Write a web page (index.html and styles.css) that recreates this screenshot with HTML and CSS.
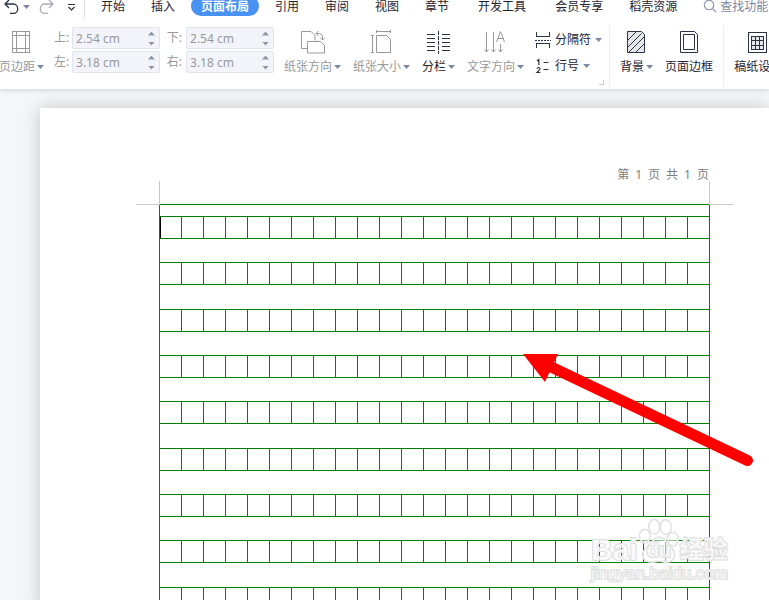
FILE: index.html
```html
<!DOCTYPE html>
<html lang="zh-CN">
<head>
<meta charset="utf-8">
<meta name="viewport" content="width=device-width, initial-scale=1">
<title>页面布局</title>
<link rel="stylesheet" href="styles.css">
</head>
<body>
<header class="toolbar">
  <nav class="tabs">
    <div class="quick">
      <button class="quick-btn" aria-label="撤销"><svg width="16" height="20" viewBox="0 0 16 20" fill="none" stroke="#2b3245" stroke-width="1.3"><path d="M2 7h8.500a4.200 4.700 0 0 1 0 9.400H7M6 3L2 7l4 4"/></svg></button>
      <button class="quick-btn" aria-label="撤销列表"><span class="caret"></span></button>
      <button class="quick-btn redo" aria-label="恢复"><svg width="16" height="20" viewBox="0 0 16 20" fill="none" stroke="#a8abb2" stroke-width="1.3"><path d="M14 7H5.500a4.200 4.700 0 0 0 0 9.400H9M10 3l4 4-4 4"/></svg></button>
      <button class="quick-btn more" aria-label="自定义快速访问"><svg width="9" height="20" viewBox="0 0 9 20" fill="none" stroke="#2b3245" stroke-width="1.2"><path d="M1 7.500h7M1.500 10l3 3 3-3"/></svg></button>
    </div>
    <a class="tab" href="#">开始</a>
    <a class="tab" href="#">插入</a>
    <a class="tab active" href="#">页面布局</a>
    <a class="tab" href="#">引用</a>
    <a class="tab" href="#">审阅</a>
    <a class="tab" href="#">视图</a>
    <a class="tab" href="#">章节</a>
    <a class="tab wide" href="#">开发工具</a>
    <a class="tab wide" href="#">会员专享</a>
    <a class="tab" href="#">稻壳资源</a>
    <button class="search"><svg width="14" height="14" viewBox="0 0 14 14" fill="none" stroke="#8d98b3" stroke-width="1.2"><circle cx="6" cy="5" r="4.700"/><path d="M9.500 8.500l3.500 3.500"/></svg>查找功能</button>
  </nav>
  <div class="ribbon">
    <div class="group first">
      <button class="tool" disabled>
        <svg width="24" height="24" viewBox="0 0 24 24" fill="none" stroke="#999" shape-rendering="crispEdges"><path d="M2.500 1.500h17v21h-17zM6.500 1.500v21M15.500 1.500v21M2.500 5.500h17M2.500 18.500h17"/></svg>
        <span class="label">页边距<span class="caret"></span></span>
      </button>
      <div class="margins">
        <label for="m-top">上:</label>
        <div class="spin"><input id="m-top" value="2.54 cm"><div class="steps"><button class="up" aria-label="增加"></button><button class="down" aria-label="减少"></button></div></div>
        <label for="m-bottom">下:</label>
        <div class="spin"><input id="m-bottom" value="2.54 cm"><div class="steps"><button class="up" aria-label="增加"></button><button class="down" aria-label="减少"></button></div></div>
        <label for="m-left">左:</label>
        <div class="spin"><input id="m-left" value="3.18 cm"><div class="steps"><button class="up" aria-label="增加"></button><button class="down" aria-label="减少"></button></div></div>
        <label for="m-right">右:</label>
        <div class="spin"><input id="m-right" value="3.18 cm"><div class="steps"><button class="up" aria-label="增加"></button><button class="down" aria-label="减少"></button></div></div>
      </div>
    </div>
    <div class="group">
      <button class="tool" disabled>
        <svg width="24" height="24" viewBox="0 0 24 24" fill="none" stroke="#999"><path d="M5.500 18.500H-.500v-17h9.500l4 4v5M5.500 11.500h13l4 4v7.500h-17zM14 3.500h3.500q3 0 3 3.500v3M16.500 1L14 3.500 16.500 6M18 7.500l2.500 2.500L23 7.500" transform="translate(1 0)"/></svg>
        <span class="label">纸张方向<span class="caret"></span></span>
      </button>
      <button class="tool" disabled>
        <svg width="24" height="24" viewBox="0 0 24 24" fill="none" stroke="#999"><path d="M6.500 1.500h14M6.500 0v3M20.500 0v3M2.500 5.500v17M1 5.500h3M1 22.500h3M6.500 5.500h10l4 4v13h-14z"/></svg>
        <span class="label">纸张大小<span class="caret"></span></span>
      </button>
      <button class="tool">
        <svg width="24" height="24" viewBox="0 0 24 24" fill="none" stroke="#2b3245" shape-rendering="crispEdges"><path d="M0 4.500h8M0 8.500h8M0 12.500h8M0 16.500h8M0 20.500h8M15 4.500h8M15 8.500h8M15 12.500h8M15 16.500h8M15 20.500h8"/><path d="M11.500 1v23" stroke-dasharray="4 1"/></svg>
        <span class="label">分栏<span class="caret"></span></span>
      </button>
      <button class="tool" disabled>
        <svg width="24" height="24" viewBox="0 0 24 24" fill="none" stroke="#999"><path d="M2.500 2v20M.500 19.500l2 2.500 2-2.500M9.500 2v20M7.500 19.500l2 2.500 2-2.500M16.500 14v8M14.500 19.500l2 2.500 2-2.500M12.500 12l4-10.500L20.500 12M14 8.500h5.500"/></svg>
        <span class="label">文字方向<span class="caret"></span></span>
      </button>
      <div class="stack">
        <button class="mini"><svg width="16" height="18" viewBox="0 0 16 18" fill="none" stroke="#2b3245" shape-rendering="crispEdges"><path d="M1.500 1v4.500h13V1M1.500 17v-4.500h13V17"/><path d="M0 9.500h16" stroke-dasharray="2 1"/></svg>分隔符<span class="caret"></span></button>
        <button class="mini"><svg width="16" height="18" viewBox="0 0 16 18" fill="none" stroke="#2b3245" stroke-width="1.200"><path d="M2 4l1.800-1.500V8M2 11.800q.3-1.300 1.600-1.300 1.400 0 1.400 1.300 0 .9-3 3.700h3.300M8.500 5.500h5M8.500 12.500h5"/></svg>行号<span class="caret"></span></button>
      </div>
      <span class="launcher"></span>
    </div>
    <div class="group">
      <button class="tool">
        <svg width="24" height="24" viewBox="0 0 24 24" fill="none" stroke="#2b3245"><path fill="#e6e7e9" d="M2.500 1.500h14l3 3v18h-17z"/><path d="M2.500 10.500l9-9M2.500 17.500l14-14M3.500 22.500l16-16M10.500 22.500l9-9"/></svg>
        <span class="label">背景<span class="caret"></span></span>
      </button>
      <button class="tool">
        <svg width="24" height="24" viewBox="0 0 24 24" fill="none" stroke="#2b3245"><path d="M3.500 1.500h14l3 3v18h-17zM6.500 4.500h11v15h-11z"/></svg>
        <span class="label">页面边框</span>
      </button>
    </div>
    <div class="group">
      <button class="tool">
        <svg width="24" height="24" viewBox="0 0 24 24" fill="none" stroke="#2b3245" shape-rendering="crispEdges"><path d="M2.500 2.500h18v20h-18z"/><path fill="#e6e7e9" d="M5.500 6.500h12v13h-12zM5.500 10.500h12M5.500 15.500h12M9.500 6.500v13M13.500 6.500v13"/></svg>
        <span class="label">稿纸设置</span>
      </button>
    </div>
  </div>
</header>
<main class="workspace">
  <article class="page">
    <div class="page-header"><span>第</span><span>1</span><span>页</span><span>共</span><span>1</span><span>页</span></div>
    <section class="manuscript">
      <div class="crop left"></div>
      <div class="crop right"></div>
      <div class="row current"></div>
      <div class="row"></div>
      <div class="row"></div>
      <div class="row"></div>
      <div class="row"></div>
      <div class="row"></div>
      <div class="row"></div>
      <div class="row"></div>
      <div class="row"></div>
    </section>
  </article>
  <svg class="arrow" width="232" height="116" viewBox="0 0 232 116"><path d="M1 0h35L23 28z" fill="#f00"/><path d="M26 11.500L225.500 106.500" stroke="#f00" stroke-width="11" stroke-linecap="round"/></svg>
  <div class="watermark">
    <div class="brand">
      <span class="bai">Bai</span>
      <span class="paw"><svg width="42" height="46" viewBox="0 0 44 48" fill="#fff" fill-opacity=".5" stroke="#dedede" stroke-width="2"><ellipse cx="7" cy="19" rx="5.500" ry="7"/><ellipse cx="17" cy="9" rx="5.500" ry="7.500"/><ellipse cx="29" cy="9.500" rx="5.500" ry="7.500"/><ellipse cx="36.500" cy="22" rx="5.500" ry="7"/><path d="M22 20c6 0 8 6 12 10 8 9 3 16-4 16-4 0-5-1-8-1s-4 1-8 1C6 46 1 39 9 31c5-4 7-11 13-11z"/></svg><span class="du">du</span></span>
      <span class="jy">经验</span>
    </div>
    <div class="site">jingyan.baidu.com</div>
  </div>
</main>
</body>
</html>
```

FILE: styles.css
```css
* { box-sizing: border-box; }

body {
  margin: 0;
  height: 100vh;
  overflow: hidden;
  display: flex;
  flex-direction: column;
  background: #f4f6f9;
  color: #1f2433;
  font: 12px/16px "Noto Sans", "Noto Sans CJK SC", sans-serif;
}

button {
  border: 0;
  padding: 0;
  background: none;
  color: inherit;
  font: inherit;
  white-space: nowrap;
}

svg { display: block; flex: none; }

.toolbar {
  position: relative;
  flex: none;
  background: #fff;
  box-shadow: 0 1px 5px rgba(0, 0, 0, 0.16);
}

/* Tab strip */
.tabs {
  display: flex;
  align-items: flex-start;
  height: 16px;
}

.quick {
  display: flex;
  flex: none;
  align-items: center;
  width: 85px;
  height: 22px;
  margin: -4px 16px 0 0;
  padding-left: 3px;
  border-right: 1px solid #dfe1e6;
}

.quick-btn { display: flex; }
.quick-btn + .quick-btn { margin-left: 4px; }
.quick-btn.redo { margin-left: 9px; }
.quick-btn.more { margin-left: 12px; }

.tab {
  flex: none;
  margin-right: 26px;
  color: inherit;
  line-height: 14px;
  text-decoration: none;
}

.tab.wide { margin-left: 3px; }

.tab.active {
  margin: -4px 16px 0 -10px;
  padding: 4px 10px 2px;
  border-radius: 10px;
  background: #4991f2;
  color: #fff;
  font-weight: bold;
}

.search {
  display: flex;
  flex: none;
  align-items: center;
  gap: 3px;
  color: #7c87a3;
  line-height: 14px;
}

.caret {
  flex: none;
  width: 7px;
  height: 4px;
  background: #7c87a3;
  clip-path: polygon(0 0, 100% 0, 50% 100%);
}

/* Ribbon */
.ribbon {
  display: flex;
  height: 73px;
  padding: 9px 0 2px;
}

.group {
  position: relative;
  display: flex;
  flex: none;
  gap: 12px;
  padding: 5px 10px 0;
}

.group + .group + .group { border-left: 1px solid #eceef2; }
.group.first { gap: 10px; padding-left: 0; padding-right: 0; margin-left: -1px; }

.group:nth-child(2) { padding-right: 7px; }

.tool {
  display: flex;
  flex-direction: column;
  align-items: center;
  gap: 5px;
  height: 45px;
}

.tool:disabled { color: #999; }

.label {
  display: flex;
  align-items: center;
  gap: 2px;
}

.margins {
  display: grid;
  grid-template-columns: 14px 88px 18px 88px;
  grid-auto-rows: 22px;
  gap: 2px 4px;
  align-items: center;
  align-content: start;
  margin-top: -3px;
  color: #999;
}

.margins label { white-space: nowrap; }
.margins label:nth-of-type(even) { justify-self: end; }

.spin {
  display: flex;
  align-items: center;
  height: 22px;
  padding: 1px 4px 0 3px;
  border: 1px solid #e0e4ee;
  border-radius: 2px;
  background: #f3f4f9;
}

.spin input {
  flex: 1;
  min-width: 0;
  padding: 0;
  border: 0;
  background: none;
  color: #999;
  font: 12px/16px "Noto Sans", sans-serif;
}

.steps { display: flex; flex-direction: column; gap: 6px; }

.steps button {
  width: 7px;
  height: 4px;
  background: #8d96aa;
}

.steps .up { clip-path: polygon(50% 0, 100% 100%, 0 100%); }
.steps .down { clip-path: polygon(0 0, 100% 0, 50% 100%); }

.stack {
  display: flex;
  flex-direction: column;
  gap: 8px;
  margin: 1px 0 0 -1px;
}

.mini {
  display: flex;
  align-items: center;
  gap: 4px;
  height: 18px;
}

.launcher {
  position: absolute;
  right: 5px;
  bottom: 2px;
  width: 5px;
  height: 5px;
  border: solid #c5cad8;
  border-width: 0 1px 1px 0;
}

/* Document */
.workspace {
  position: relative;
  flex: 1;
  min-height: 0;
  overflow: hidden;
  padding: 19px 0 0 40px;
}

.page {
  min-height: 100%;
  padding: 59px 59px 0 119px;
  background: #fff;
  box-shadow: 0 0 18px rgba(0, 0, 0, 0.2);
}

.page-header {
  display: flex;
  justify-content: flex-end;
  gap: 6px;
  padding-right: 1px;
  margin-bottom: 21px;
  color: #808080;
}

.manuscript {
  position: relative;
  width: 551px;
  padding-top: 11px;
  border: 1px solid #008000;
  border-bottom: 0;
}

.row {
  height: 23px;
  margin-bottom: 23px;
  border: solid #008000;
  border-width: 1px 0;
  background: repeating-linear-gradient(to right, transparent 0 21px, #008000 21px 22px);
}

.row:nth-of-type(3n + 4) { margin-bottom: 24px; }
.row.current { box-shadow: inset 1px 0 #000; }

.crop {
  position: absolute;
  top: -24px;
  width: 24px;
  height: 24px;
  border-bottom: 1px solid #c8c8c8;
}

.crop.left { right: 100%; border-right: 1px solid #c8c8c8; }
.crop.right { left: 100%; border-left: 1px solid #c8c8c8; }

.arrow {
  position: absolute;
  left: 522px;
  top: 265px;
}

/* Watermark */
.watermark {
  position: absolute;
  right: 41px;
  bottom: 16px;
  color: rgba(255, 255, 255, 0.7);
  font-family: "Liberation Sans", "Noto Sans CJK SC", sans-serif;
  -webkit-text-stroke: 2px #dedede;
  paint-order: stroke fill;
}

.brand {
  display: flex;
  align-items: flex-end;
  height: 46px;
  font-size: 30px;
  font-weight: bold;
  line-height: 28px;
}

.paw { position: relative; }

.du {
  position: absolute;
  left: 9px;
  bottom: 2px;
  font-size: 20px;
  line-height: 24px;
}

.jy { font-size: 24px; }

.site {
  font-size: 17px;
  line-height: 20px;
}
```
